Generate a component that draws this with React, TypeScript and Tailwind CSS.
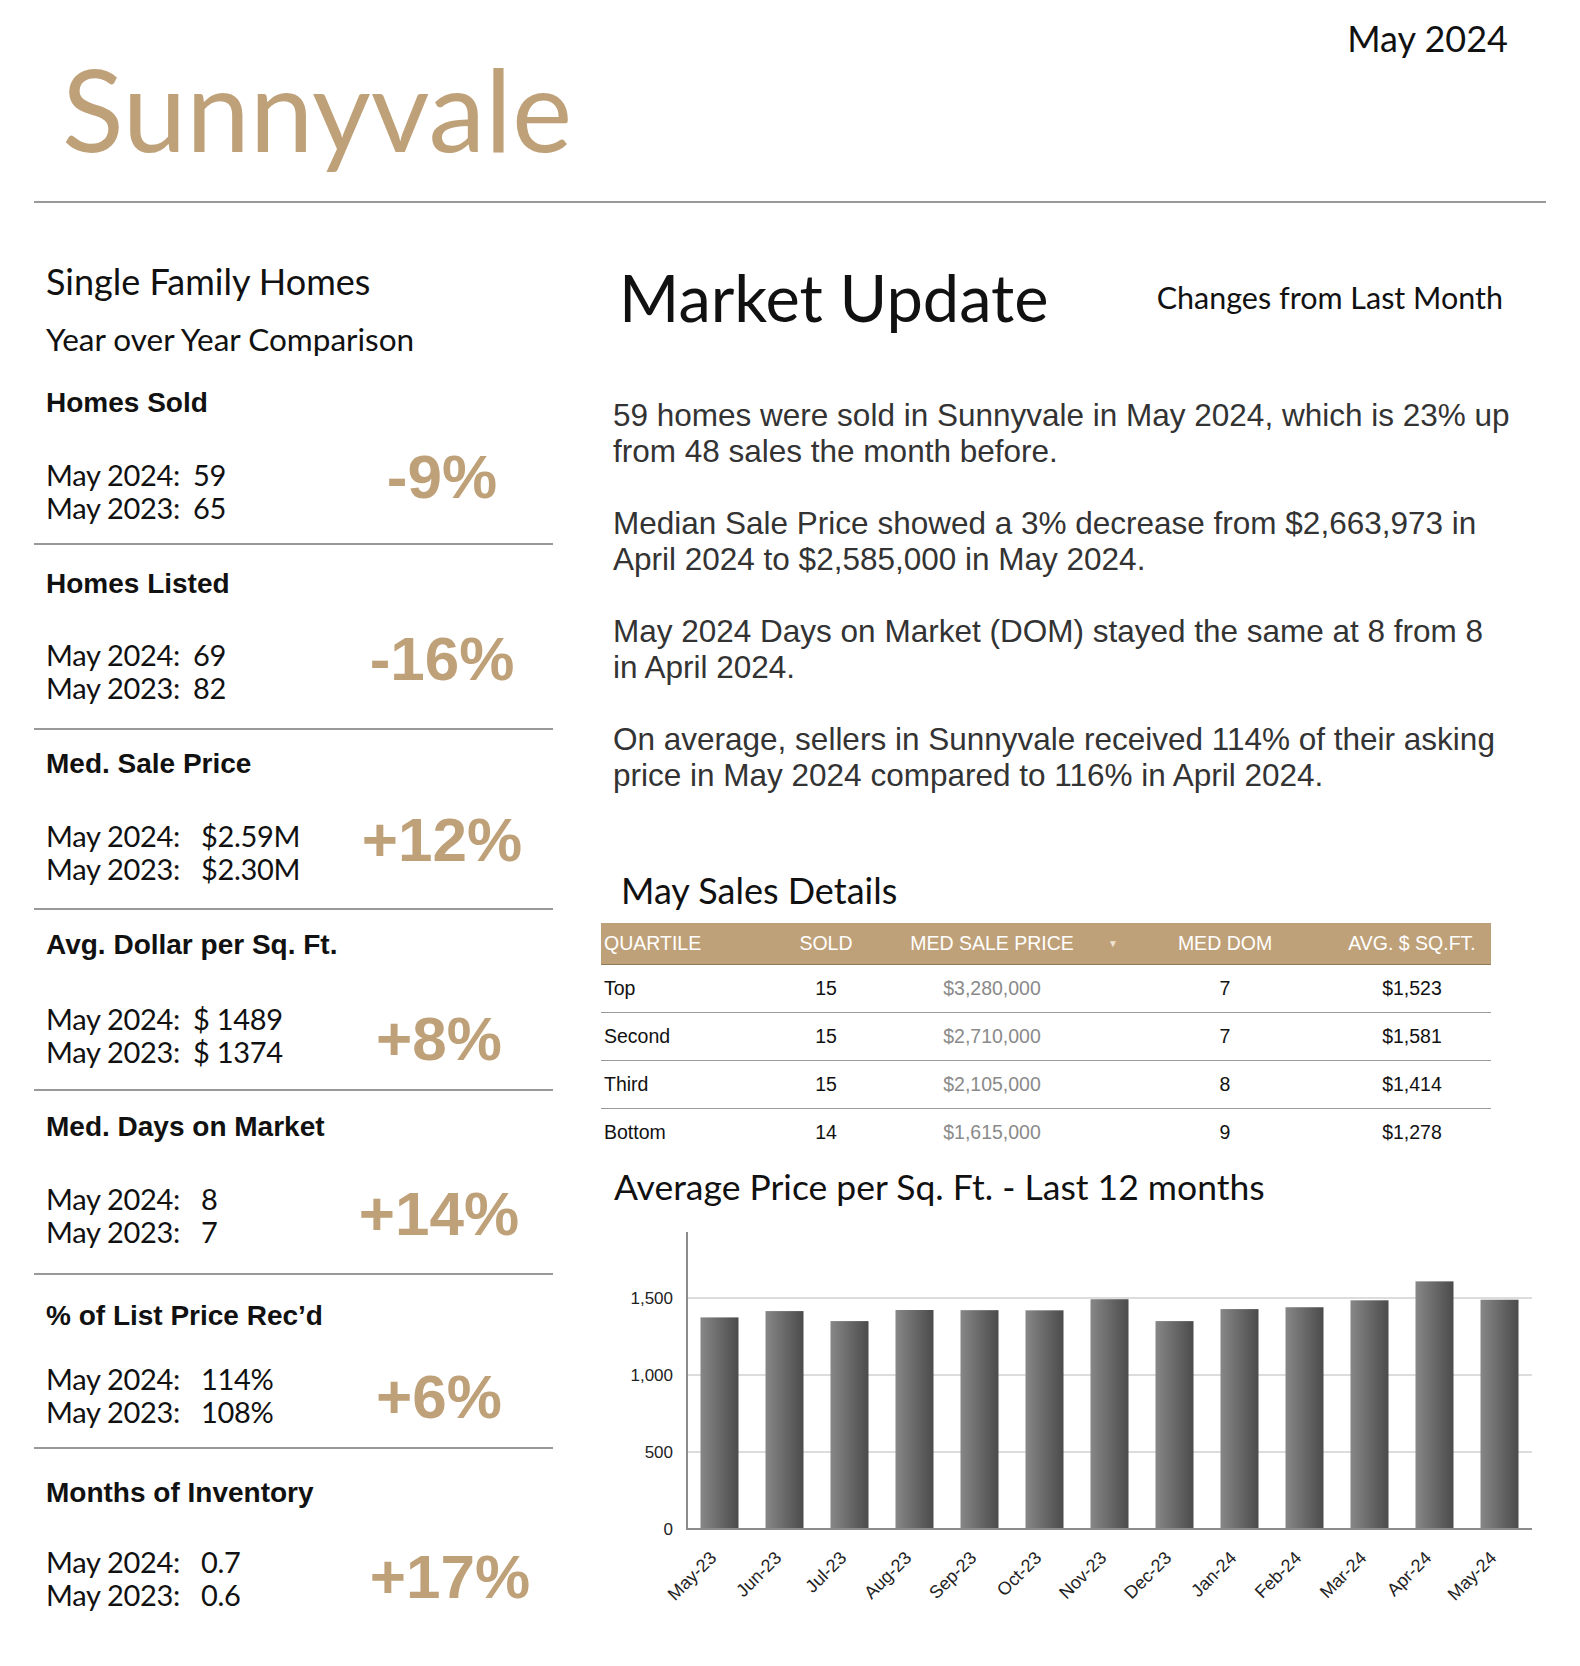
import React from 'react';

const stats = [
  { title: 'Homes Sold', a: '59', b: '65', pct: '-9%', box: 'h-[178px] pt-[21px]', gap: 'mt-[38px]', pm: '-mt-[5px] pl-0', lw: 'w-[147px]' },
  { title: 'Homes Listed', a: '69', b: '82', pct: '-16%', box: 'h-[185px] pt-[22px] border-t-2', gap: 'mt-[37px]', pm: '-mt-[3px] pl-0', lw: 'w-[147px]' },
  { title: 'Med. Sale Price', a: '$2.59M', b: '$2.30M', pct: '+12%', box: 'h-[180px] pt-[17px] border-t-2', gap: 'mt-[38px]', pm: '-mt-[3px] pl-0', lw: 'w-[155px]' },
  { title: 'Avg. Dollar per Sq. Ft.', a: '$ 1489', b: '$ 1374', pct: '+8%', box: 'h-[181px] pt-[18px] border-t-2', gap: 'mt-[40px]', pm: 'mt-[13px] pr-[6px]', lw: 'w-[147px]' },
  { title: 'Med. Days on Market', a: '8', b: '7', pct: '+14%', box: 'h-[184px] pt-[19px] border-t-2', gap: 'mt-[38px]', pm: 'mt-[8px] pr-[6px]', lw: 'w-[155px]' },
  { title: '% of List Price Rec’d', a: '114%', b: '108%', pct: '+6%', box: 'h-[174px] pt-[24px] border-t-2', gap: 'mt-[29px]', pm: 'mt-[11px] pr-[6px]', lw: 'w-[155px]' },
  { title: 'Months of Inventory', a: '0.7', b: '0.6', pct: '+17%', box: 'h-[200px] pt-[27px] border-t-2', gap: 'mt-[35px]', pm: 'mt-[8px] pl-[16px]', lw: 'w-[155px]' },
];

const rows = [
  { q: 'Top', sold: '15', price: '$3,280,000', dom: '7', sqft: '$1,523' },
  { q: 'Second', sold: '15', price: '$2,710,000', dom: '7', sqft: '$1,581' },
  { q: 'Third', sold: '15', price: '$2,105,000', dom: '8', sqft: '$1,414' },
  { q: 'Bottom', sold: '14', price: '$1,615,000', dom: '9', sqft: '$1,278' },
];

const months = ['May-23', 'Jun-23', 'Jul-23', 'Aug-23', 'Sep-23', 'Oct-23', 'Nov-23', 'Dec-23', 'Jan-24', 'Feb-24', 'Mar-24', 'Apr-24', 'May-24'];
const values = [1374, 1415, 1350, 1422, 1421, 1420, 1492, 1350, 1428, 1440, 1485, 1608, 1489];

function PriceChart() {
  const x0 = 86;
  const zero = 309;
  const k = 0.154;
  const step = 65;
  return (
    <svg width="940" height="400" className="block">
      <defs>
        <linearGradient id="bar" x1="0" x2="1" y1="0" y2="0">
          <stop offset="0" stopColor="#878787" />
          <stop offset="1" stopColor="#4b4b4b" />
        </linearGradient>
      </defs>
      {[500, 1000, 1500].map((v) => (
        <line key={v} x1={x0} x2={931} y1={zero - v * k} y2={zero - v * k} stroke="#dcdcdc" strokeWidth={2} />
      ))}
      {values.map((v, i) => (
        <rect key={i} x={x0 + step * i + 13.5} y={zero - v * k} width={38} height={v * k} fill="url(#bar)" />
      ))}
      <line x1={x0} x2={x0} y1={12} y2={zero + 1} stroke="#8c8c8c" strokeWidth={2} />
      <line x1={x0 - 1} x2={931} y1={zero} y2={zero} stroke="#8c8c8c" strokeWidth={2} />
      {[0, 500, 1000, 1500].map((v) => (
        <text key={v} x={72} y={zero - v * k + 6} textAnchor="end" fontSize={17} fill="#222" fontFamily="'Liberation Sans', Arial, sans-serif">
          {v.toLocaleString('en-US')}
        </text>
      ))}
      {months.map((m, i) => {
        const cx = x0 + step * i + 32.5;
        return (
          <text key={m} transform={`translate(${cx - 2} ${zero + 30}) rotate(-45)`} textAnchor="end" fontSize={18} fill="#222" fontFamily="'Liberation Sans', Arial, sans-serif">
            {m}
          </text>
        );
      })}
    </svg>
  );
}

export default function App() {
  return (
    <div className="w-[1580px] h-[1666px] bg-white text-[#111] overflow-hidden">
      {/* Header */}
      <div className="flex justify-between h-[201px]">
        <h1 className="pl-[62px] pt-[51px] font-['Lato',sans-serif] font-normal text-[114px] leading-none text-[#bfa179]">
          Sunnyvale
        </h1>
        <div className="pr-[72px] pt-[18px] font-['Lato',sans-serif] text-[36px] leading-[40px]">May 2024</div>
      </div>
      <div className="mx-[34px] border-t-2 border-[#999]" />

      <div className="flex">
        {/* Year over year column */}
        <div className="ml-[34px] w-[519px]">
          <div className="pl-[12px] pt-[58px] font-['Lato',sans-serif]">
            <div className="text-[36px] leading-[40px]">Single Family Homes</div>
            <div className="mt-[18px] text-[31.5px] leading-[40px]">Year over Year Comparison</div>
          </div>
          <div className="mt-[6px]">
            {stats.map((s) => (
              <div key={s.title} className={`${s.box} border-[#999] pl-[12px]`}>
                <div className="font-['Liberation_Sans',Arial,sans-serif] font-bold text-[28px] leading-[34px]">{s.title}</div>
                <div className={`${s.gap} flex`}>
                  <div className="flex-1 font-['Lato',sans-serif] text-[29px] leading-[33px] tracking-[-0.3px] whitespace-nowrap">
                    <div className="flex">
                      <span className={s.lw}>May 2024:</span>
                      <span>{s.a}</span>
                    </div>
                    <div className="flex">
                      <span className={s.lw}>May 2023:</span>
                      <span>{s.b}</span>
                    </div>
                  </div>
                  <div className={`${s.pm} w-[222px] text-center font-['Liberation_Sans',Arial,sans-serif] font-bold text-[62px] leading-[48px] text-[#bfa179]`}>
                    {s.pct}
                  </div>
                </div>
              </div>
            ))}
          </div>
        </div>

        {/* Market update column */}
        <div className="ml-[48px] w-[939px]">
          <div className="flex items-center pt-[59px]">
            <h2 className="pl-[18px] font-['Lato',sans-serif] text-[65px] leading-[70px]">Market Update</h2>
            <div className="ml-auto pr-[37px] font-['Lato',sans-serif] text-[30.5px] leading-[40px]">Changes from Last Month</div>
          </div>

          <div className="mt-[65px] pl-[12px] font-['Liberation_Sans',Arial,sans-serif] text-[31.5px] leading-[36px] text-[#333] whitespace-nowrap">
            <p>
              59 homes were sold in Sunnyvale in May 2024, which is 23% up
              <br />
              from 48 sales the month before.
            </p>
            <p className="mt-[36px]">
              Median Sale Price showed a 3% decrease from $2,663,973 in
              <br />
              April 2024 to $2,585,000 in May 2024.
            </p>
            <p className="mt-[36px]">
              May 2024 Days on Market (DOM) stayed the same at 8 from 8
              <br />
              in April 2024.
            </p>
            <p className="mt-[36px]">
              On average, sellers in Sunnyvale received 114% of their asking
              <br />
              price in May 2024 compared to 116% in April 2024.
            </p>
          </div>

          <div className="mt-[77px] pl-[20px] font-['Lato',sans-serif] text-[36px] leading-[40px]">May Sales Details</div>

          {/* Sales table */}
          <div className="mt-[13px] w-[890px] font-['Liberation_Sans',Arial,sans-serif]">
            <div className="grid grid-cols-[159px_132px_200px_68px_130px_201px] h-[42px] items-center bg-[#bfa179] border-b border-[#8f7a5a] text-white text-[19.5px]">
              <div className="pl-[3px]">QUARTILE</div>
              <div className="text-center">SOLD</div>
              <div className="text-center">MED SALE PRICE</div>
              <div className="pl-[16px] text-[10px] text-[#eee3d2]">▼</div>
              <div className="text-center">MED DOM</div>
              <div className="pl-[43px] text-center">AVG. $ SQ.FT.</div>
            </div>
            {rows.map((r, i) => (
              <div
                key={r.q}
                className={`grid grid-cols-[159px_132px_200px_68px_130px_201px] h-[48px] items-center text-[19.5px] ${i < rows.length - 1 ? 'border-b border-[#9a9a9a]' : ''}`}
              >
                <div className="pl-[3px]">{r.q}</div>
                <div className="text-center">{r.sold}</div>
                <div className="text-center text-[#8a8a8a]">{r.price}</div>
                <div />
                <div className="text-center">{r.dom}</div>
                <div className="pl-[43px] text-center">{r.sqft}</div>
              </div>
            ))}
          </div>

          <div className="mt-[10px] pl-[13px] font-['Lato',sans-serif] text-[35.5px] leading-[40px]">
            Average Price per Sq. Ft. - Last 12 months
          </div>
          <div className="mt-[13px]">
            <PriceChart />
          </div>
        </div>
      </div>
    </div>
  );
}
